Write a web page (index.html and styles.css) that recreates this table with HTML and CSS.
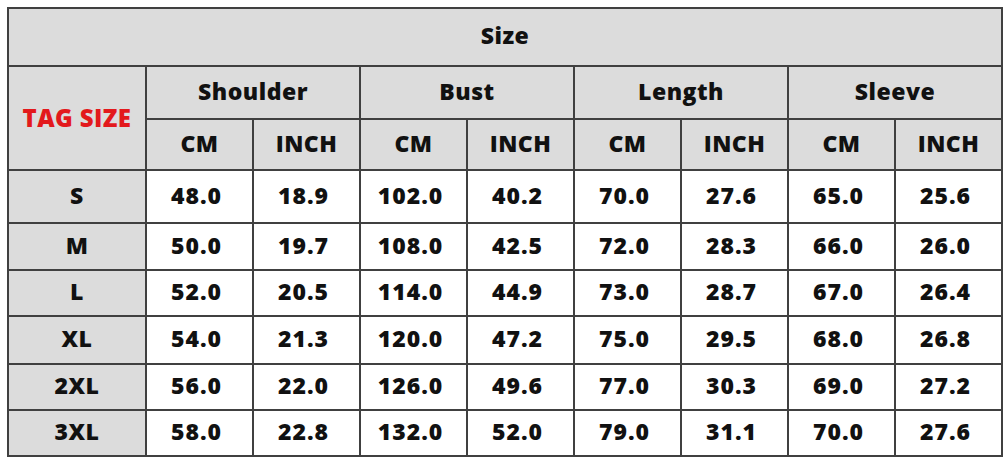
FILE: index.html
```html
<!DOCTYPE html>
<html>
<head>
<meta charset="utf-8">
<link rel="stylesheet" href="styles.css">
</head>
<body>
<table class="size-table">
  <colgroup>
    <col class="c-tag">
    <col class="c-val"><col class="c-val"><col class="c-val"><col class="c-val">
    <col class="c-val"><col class="c-val"><col class="c-val"><col class="c-val">
  </colgroup>
  <tr class="r-title"><th colspan="9">Size</th></tr>
  <tr class="r-h1">
    <th rowspan="2" class="tag">TAG SIZE</th>
    <th colspan="2">Shoulder</th>
    <th colspan="2">Bust</th>
    <th colspan="2">Length</th>
    <th colspan="2">Sleeve</th>
  </tr>
  <tr class="r-h2">
    <th>CM</th><th>INCH</th><th>CM</th><th>INCH</th><th>CM</th><th>INCH</th><th>CM</th><th>INCH</th>
  </tr>
  <tr class="r-s"><th>S</th><td>48.0</td><td>18.9</td><td>102.0</td><td>40.2</td><td>70.0</td><td>27.6</td><td>65.0</td><td>25.6</td></tr>
  <tr class="r-m"><th>M</th><td>50.0</td><td>19.7</td><td>108.0</td><td>42.5</td><td>72.0</td><td>28.3</td><td>66.0</td><td>26.0</td></tr>
  <tr class="r-l"><th>L</th><td>52.0</td><td>20.5</td><td>114.0</td><td>44.9</td><td>73.0</td><td>28.7</td><td>67.0</td><td>26.4</td></tr>
  <tr class="r-xl"><th>XL</th><td>54.0</td><td>21.3</td><td>120.0</td><td>47.2</td><td>75.0</td><td>29.5</td><td>68.0</td><td>26.8</td></tr>
  <tr class="r-2xl"><th>2XL</th><td>56.0</td><td>22.0</td><td>126.0</td><td>49.6</td><td>77.0</td><td>30.3</td><td>69.0</td><td>27.2</td></tr>
  <tr class="r-3xl"><th>3XL</th><td>58.0</td><td>22.8</td><td>132.0</td><td>52.0</td><td>79.0</td><td>31.1</td><td>70.0</td><td>27.6</td></tr>
</table>
</body>
</html>
```
FILE: styles.css
```css
html, body {
  margin: 0;
  padding: 0;
  background: #ffffff;
}
.size-table {
  margin: 7px 0 0 7px;
  border-collapse: collapse;
  table-layout: fixed;
  width: 994px;
  font-family: "Open Sans", "DejaVu Sans", sans-serif;
  font-weight: 700;
  font-size: 23px;
  color: #111111;
}
.c-tag { width: 138px; }
.c-val { width: 107px; }
.size-table th,
.size-table td {
  border: 2px solid #404040;
  text-align: center;
  vertical-align: middle;
  padding: 0 0 4px 0;
  font-weight: 800;
  letter-spacing: 0.5px;
}
.size-table th {
  background: #dcdcdc;
}
.size-table td {
  background: #ffffff;
  letter-spacing: 1px;
  padding-right: 6px;
}
.size-table .tag {
  color: #e3191c;
  font-size: 24px;
  letter-spacing: 0.4px;
  padding-bottom: 2px;
}
.r-title { height: 58px; }
.r-h1 { height: 53px; }
.r-h2 { height: 51px; }
.r-s { height: 53px; }
.r-m { height: 47px; }
.r-l { height: 46px; }
.r-xl { height: 48px; }
.r-2xl { height: 46px; }
.r-3xl { height: 46px; }
```
